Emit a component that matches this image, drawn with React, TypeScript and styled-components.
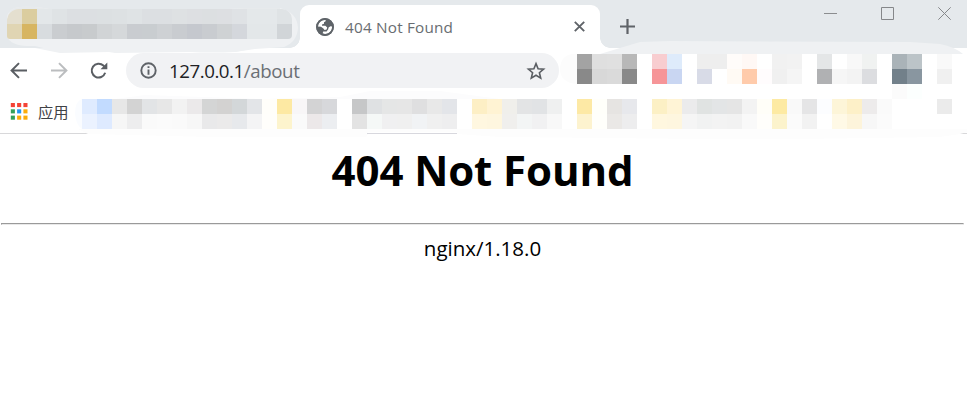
import React from "react";
import styled, { createGlobalStyle } from "styled-components";

const GlobalStyle = createGlobalStyle`
  *, *::before, *::after { box-sizing: border-box; }
  html, body { margin: 0; background: #fff; overflow: hidden; }
  body { font-family: "Open Sans", "Noto Sans", "Noto Sans CJK SC", sans-serif; }
`;

const Window = styled.div`
  position: relative;
  width: 967px;
  height: 418px;
  display: flex;
  flex-direction: column;
  background: #fff;
`;

const TabStrip = styled.header`
  flex: 0 0 48px;
  display: flex;
  background: #e5e9ec;
`;

const BlurredTab = styled.div`
  width: 300px;
  padding: 9px 0 0 7px;
  position: relative;
`;

const ActiveTab = styled.div`
  position: relative;
  display: flex;
  align-items: center;
  width: 300px;
  height: 43px;
  margin-top: 5px;
  padding: 0 13px 0 16px;
  background: #fff;
  border-radius: 9px 9px 0 0;
  &::before, &::after {
    content: "";
    position: absolute;
    bottom: 0;
    width: 10px;
    height: 10px;
  }
  &::before { left: -10px; background: radial-gradient(circle at 0 0, transparent 9.5px, #fff 10px); }
  &::after { right: -10px; background: radial-gradient(circle at 100% 0, transparent 9.5px, #fff 10px); }
`;

const TabTitle = styled.span`
  flex: 1;
  margin-left: 11px;
  font-size: 15.3px;
  letter-spacing: 0.2px;
  line-height: 20px;
  color: #696d71;
  white-space: nowrap;
`;

const NewTab = styled.div`
  margin: 19px 0 0 20px;
  height: 15px;
  display: flex;
`;

const WindowControls = styled.div`
  margin: 7px 16px 0 auto;
  display: flex;
  height: 13px;
  gap: 44px;
`;

const Toolbar = styled.div`
  flex: 0 0 45px;
  min-height: 0;
  height: 45px;
  display: flex;
  padding-top: 5px;
`;

const NavButtons = styled.div`
  width: 126px;
  height: 35px;
  padding-left: 10px;
  display: flex;
  align-items: center;
  gap: 22px;
`;

const AddressBar = styled.div`
  width: 433px;
  height: 35px;
  border-radius: 18px;
  background: #f1f2f4;
  display: flex;
  align-items: center;
  padding: 0 13px 0 14px;
`;

const Address = styled.span`
  flex: 1;
  margin-left: 12px;
  font-size: 18.7px;
  letter-spacing: -0.45px;
  line-height: 24px;
  color: #202124;
  white-space: nowrap;
`;

const Path = styled.span`
  color: #6b6f74;
  letter-spacing: -0.4px;
`;

const ToolbarMosaic = styled.div`
  margin: 1px 0 0 18px;
  z-index: 1;
`;

const BookmarksBar = styled.div`
  flex: 0 0 41px;
  display: flex;
  padding: 6px 0 0 10px;
  border-bottom: 1px solid #d8d8da;
`;

const AppsLink = styled.div`
  width: 72px;
  height: 23px;
  display: flex;
  align-items: center;
  gap: 10px;
  color: #3f4246;
  font: 15.3px/22px "Noto Sans CJK SC", sans-serif;
  white-space: nowrap;
`;

const AppsLabel = styled.span`
  margin-top: 1px;
`;

const BookmarkMosaic = styled.div`
  z-index: 1;
`;

const MosaicGrid = styled.div<{ $columns: number }>`
  display: grid;
  grid-template-columns: repeat(${(p) => p.$columns}, 15px);
  grid-auto-rows: 15px;
`;

const TabMosaicGrid = styled(MosaicGrid)`
  position: relative;
  z-index: 1;
  width: 285px;
  overflow: hidden;
  border-radius: 12px 10px 4px 3px;
`;

const Cell = styled.i<{ $color: string }>`
  background: ${(p) => p.$color};
`;

const Smear = styled.svg`
  position: absolute;
  left: 0;
  top: 0;
  pointer-events: none;
`;

const Page = styled.main`
  display: flex;
  flex-direction: column;
  align-items: center;
  padding: 0 3px 0 1px;
`;

const Heading = styled.h1`
  margin: 7px 0 0;
  font-size: 42px;
  line-height: 58px;
  letter-spacing: -0.1px;
  font-weight: 700;
  color: #000;
  white-space: nowrap;
`;

const Rule = styled.hr`
  width: 100%;
  margin: 24px 0 0;
  height: 2px;
  border: 1px solid;
  border-color: #9a9a9a #e9e9e9 #e9e9e9 #9a9a9a;
`;

const Server = styled.p`
  margin: 9px 0 0;
  font-size: 20.5px;
  line-height: 28px;
  letter-spacing: 0;
  color: #000;
  white-space: nowrap;
`;

const W = "fff";

const tabRows = [
  "e4dfcf dbcd9f e3e7e9 dfe3e5 dcdfe2 dcdfe2 dce0e2 dde1e3 dfe3e5 dcdfe2 dcdfe2 dee1e3 dddfe2 dcdfe1 dddfe2 dfe2e5 e4e8ea e4e8ea dfe3e5",
  "e0d5b3 d7b561 d8dcdf cacdd0 c6c9cc c8cbcd d1d4d6 d5d8da c9ccd0 c9cdd0 ced1d4 c9ccd0 c5c8ce c9ccd0 cfd2d4 d4d7dc e3e7e9 e3e7e9 d1d5d8",
];

const toolbarRows = [
  "a3a3a3 dfdfdf e0e0e0 b8b8b8 fff f8cdd0 deebfb fff eeeeee eeeeee fffcfa fff8f5 fff f1f1f1 f2f2f2 fff e4e6e7 fff f8f8f8 f0f2f1 fff aab3b8 bcc4c8 fff f9f9f9 fff",
  "898989 d8d8d8 dadada 898989 fff f69598 c9d6f2 fff d8dbe7 fff fffaf4 ffcbab fffcfd f0f0f0 f5f5f5 fff b0b1b3 f6f6f6 f3f3f3 dcdde0 fff 72808a 8996a0 fff f0f0f0 fff",
  [...Array(21).fill(W), "fbfbfb", "fcfffe", W, W, W].join(" "),
];

const bookmarkRows = [
  "dfebff c2dbff e7e7e7 d3d3d3 e2e4e6 e7e7e7 f2f2f2 ebe9ea d4d5d5 d3d2d1 d3d7d9 e3e5e8 fffefa fde9a3 f8f6f7 d3d3d4 d7d8db fff c6c7c8 dfe1e3 e5e6e6 e6e6e6 dfdfe0 e8e8e8 e3e5e9 fff fdefc5 fff3d3 f0efeb e3e4e5 e1e3e5 eff0f0 fff fde9a5 fffffa e6e4e2 e7e8ec fff fcf0c5 fff4d6 ebebec e0e3e2 e3e5e6 e5e5e5 f3f3f3 fffef8 fdeaa3 f9f9f9 e5e5e6 fcfdff fdf5d8 fdf0c8 edebeb fafafa fff fff fff ebebeb fff",
  "ebf2ff deeaff f6f6f6 ededee fafafa fbfbfb fafafa f7f7f7 e9e9ea ebeaea e7e9ec f4f4f5 fffefb fdf4cd fafafa ece8e9 eceef1 fff e3e3e3 f5f8f7 f0f0f1 f0f0f0 f1f3f5 f0f0f0 eeeeef fff fff7e0 fef6df f0efed f3f5f5 f1f1f2 f8f8f8 fff fdf3cf fffffb eae8e6 ededee fff fff7df fef6df f5f5f5 f1f2f2 f3f3f3 f2f2f2 f9f9f9 fffefb fcf3cc fbfbfb f2f2f2 fff fff9e6 fdf4db f7f7f7 fbfbfb fff fff fff fff fff",
];

function Mosaic({ rows, as: Grid = MosaicGrid }: { rows: string[]; as?: typeof MosaicGrid }) {
  const cells = rows.map((row) => row.split(" "));
  return (
    <Grid $columns={cells[0].length}>
      {cells.flat().map((color, i) => (
        <Cell key={i} $color={`#${color}`} />
      ))}
    </Grid>
  );
}

const appColors = ["#f44336", "#f44336", "#f44336", "#34a05a", "#2196f3", "#fbac09", "#34a05a", "#fbac09", "#fbac09"];

function AppsIcon() {
  return (
    <svg width="18" height="18" viewBox="0 0 18 18">
      {appColors.map((color, i) => (
        <rect key={i} x={0.8 + (i % 3) * 6.3} y={1 + Math.floor(i / 3) * 6.3} width="4.1" height="4.1" fill={color} />
      ))}
    </svg>
  );
}

function GlobeIcon() {
  return (
    <svg width="18" height="18" viewBox="0 0 18 18">
      <circle cx="9" cy="9" r="8.9" fill="#5f6469" />
      <path
        d="M1.7 8.6A7.3 7.3 0 0 1 9.8 1.8L9.6 3.2L8 4.2V5.8L6 6.4V7.8H9.4L11.2 9.6L10.6 11.4L8.6 12L7.4 10.6L5 8.8Z"
        fill="#fff"
      />
      <path d="M6.6 15.6L7.2 13.6L10.6 13.4L12.2 11.2L12.6 9.4L14.4 8.2L16.3 8.6A7.3 7.3 0 0 1 6.6 15.6Z" fill="#fff" />
      <circle cx="9" cy="9" r="8" fill="none" stroke="#5f6469" strokeWidth="1.8" />
    </svg>
  );
}

export default function App() {
  return (
    <>
      <GlobalStyle />
      <Window>
        <TabStrip>
          <BlurredTab>
            <Smear width="300" height="54" viewBox="0 0 300 54">
              <path d="M130 47H290Q298 47 300 38V48H130Z" fill="#e5e9ec" />
              <path
                d="M7 18Q8 8 20 7Q40 6 62 12L155 13L180 12L245 8H280Q297 12 298 28Q297 42 284 47L255 49L235 52H60L35 46Q10 47 7 36Z"
                fill="#eff1f3"
              />
              <path d="M20 7Q40 6 62 12L155 13L180 12L245 8H280V24H8V18Q8 8 20 7Z" fill="#e7eaec" />
            </Smear>
            <Mosaic rows={tabRows} as={TabMosaicGrid as typeof MosaicGrid} />
          </BlurredTab>
          <ActiveTab>
            <GlobeIcon />
            <TabTitle>404 Not Found</TabTitle>
            <svg width="15" height="15" viewBox="0 0 15 15" stroke="#5f6368" strokeWidth="1.9">
              <path d="M2.8 2.8L12.2 12.2M12.2 2.8L2.8 12.2" />
            </svg>
          </ActiveTab>
          <NewTab>
            <svg width="15" height="15" viewBox="0 0 15 15" stroke="#5f6368" strokeWidth="2.2">
              <path d="M0 7.5H15M7.5 0V15" />
            </svg>
          </NewTab>
          <WindowControls>
            <svg width="13" height="13" viewBox="0 0 13 13">
              <path d="M0 6.5H13" stroke="#8b8d8f" />
            </svg>
            <svg width="13" height="13" viewBox="0 0 13 13">
              <path d="M.5 .5H12.5V12.5H.5Z" stroke="#85878a" fill="none" />
            </svg>
            <svg width="13" height="13" viewBox="0 0 13 13">
              <path d="M.3 .3L12.7 12.7M12.7 .3L.3 12.7" stroke="#85878a" />
            </svg>
          </WindowControls>
        </TabStrip>
        <Toolbar>
          <NavButtons>
            <svg width="18" height="18" viewBox="0 0 18 18" fill="none" stroke="#5a5e63" strokeWidth="2">
              <path d="M17 8.5H2M9 1.1L1.6 8.5L9 15.9" />
            </svg>
            <svg width="18" height="18" viewBox="0 0 18 18" fill="none" stroke="#bbbdbf" strokeWidth="2">
              <path d="M1 8.5H16M9 1.1L16.4 8.5L9 15.9" />
            </svg>
            <svg width="18" height="18" viewBox="0 0 18 18" fill="none" stroke="#5a5e63" strokeWidth="2">
              <path d="M15.2 10.8A6.9 6.9 0 1 1 13.4 3.6L15.4 5.6" />
              <path d="M17.3 .5V7.3H10.5Z" fill="#5a5e63" stroke="none" />
            </svg>
          </NavButtons>
          <AddressBar>
            <svg width="17" height="17" viewBox="0 0 17 17">
              <circle cx="8.5" cy="8.5" r="7.2" fill="none" stroke="#5f6368" strokeWidth="1.9" />
              <path d="M8.5 7.6V12.7M8.5 4.2V6.1" stroke="#5f6368" strokeWidth="1.9" />
            </svg>
            <Address>
              127.0.0.1<Path>/about</Path>
            </Address>
            <svg width="20" height="20" viewBox="0 0 20 20">
              <path
                d="M10 2.6L12.1 7.7L17.6 8.1L13.4 11.7L14.7 17.1L10 14.2L5.3 17.1L6.6 11.7L2.4 8.1L7.9 7.7Z"
                fill="none"
                stroke="#5a5e63"
                strokeWidth="1.6"
              />
            </svg>
          </AddressBar>
          <ToolbarMosaic>
            <Mosaic rows={toolbarRows} />
          </ToolbarMosaic>
        </Toolbar>
        <BookmarksBar>
          <AppsLink>
            <AppsIcon />
            <AppsLabel>应用</AppsLabel>
          </AppsLink>
          <BookmarkMosaic>
            <Mosaic rows={bookmarkRows} />
          </BookmarkMosaic>
        </BookmarksBar>
        <Smear width="967" height="140" viewBox="0 0 967 140">
          <path d="M60 48H255L235 52Q212 53 190 52L115 53L109 52L60 53L35 48Z" fill="#eff1f3" />
          <path d="M600 54L640 42L670 41L910 42L940 44Q955 47 963 54Z" fill="#eff1f3" />
          <path d="M577 54H572Q560 56 560 70Q561 83 577 84Z" fill="#fcfcfc" />
          <path d="M82 99Q75 101 75 114Q76 125 82 129Z" fill="#fafcff" />
          <path d="M115 99L145 95L260 99L340 97L370 91H440L500 99Z" fill="#fcfcfd" />
          <path d="M78 129H967V132L960 134L940 137L800 139H700L500 137L457 134V132H368V134L366 137L210 137L88 134Z" fill="#fdfdfd" />
          <path d="M367 133.5H457" stroke="#d8d8de" />
        </Smear>
        <Page>
          <Heading>404 Not Found</Heading>
          <Rule />
          <Server>nginx/1.18.0</Server>
        </Page>
      </Window>
    </>
  );
}
